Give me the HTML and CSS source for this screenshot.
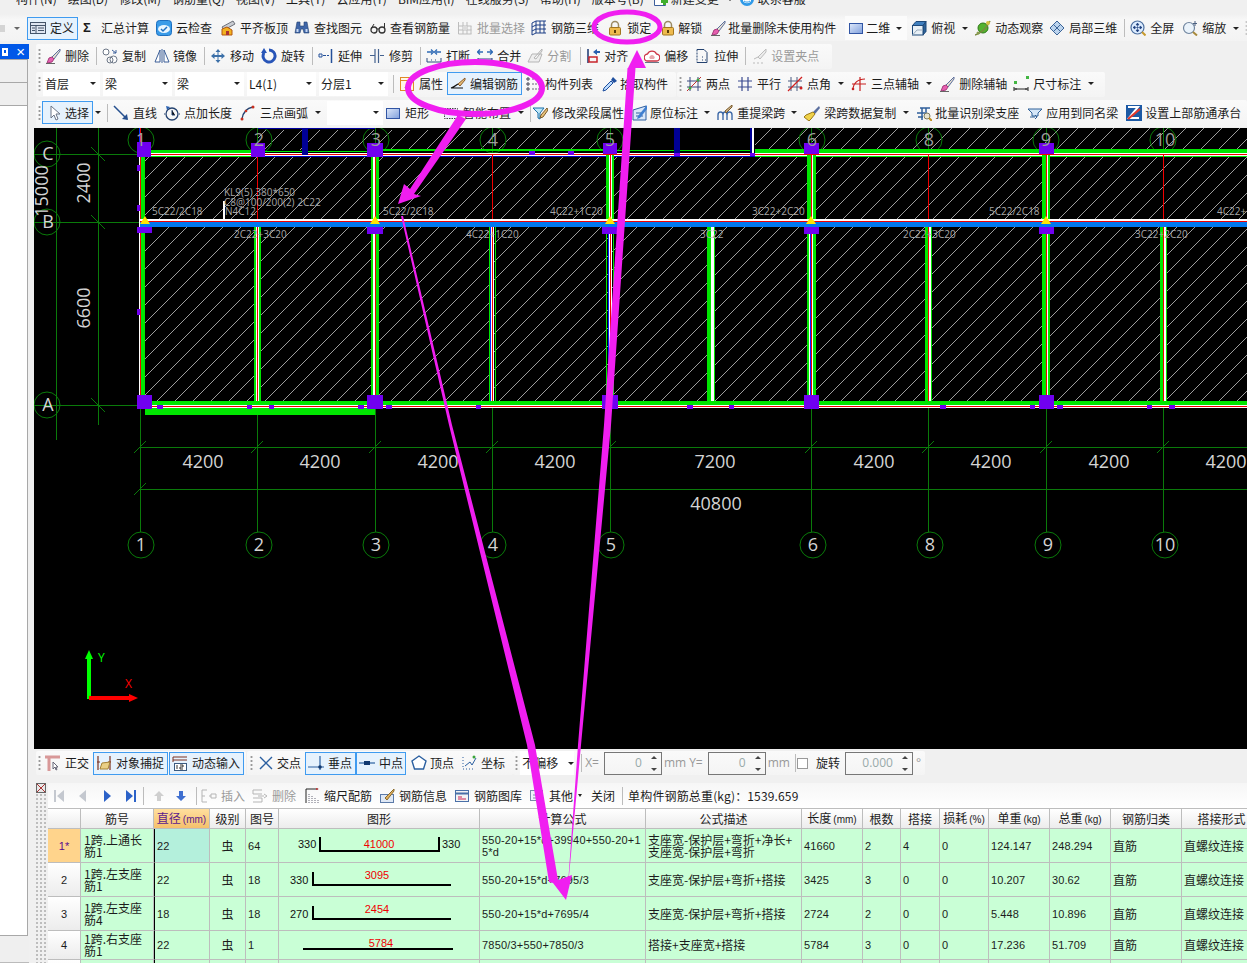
FILE: index.html
```html
<!DOCTYPE html>
<html lang="zh-CN">
<head>
<meta charset="utf-8">
<title>钢筋算量</title>
<link rel="stylesheet" href="styles.css">
</head>
<body>
<svg class="defs" aria-hidden="true">
<defs>
<pattern id="hatch" patternUnits="userSpaceOnUse" width="18" height="18"><path d="M-1 19L19 -1" stroke="#c4c4c4" stroke-width=".8"/><path d="M-1 1L1 -1M17 19L19 17" stroke="#c4c4c4" stroke-width=".8"/></pattern>
<symbol id="def" viewBox="0 0 16 16"><rect x=".5" y="2.5" width="15" height="11" fill="#dfe6f2" stroke="#44546a"/><path d="M.5 5.5h15M6 5.5v8M8 8h6M8 10.500h6M2 8h3M2 10.500h3" stroke="#44546a" fill="none"/></symbol>
<symbol id="cloud" viewBox="0 0 16 16"><rect x=".5" y=".5" width="15" height="15" rx="3" fill="#3a9be8" stroke="#1d6fc0"/><ellipse cx="8" cy="9" rx="6" ry="4" fill="#e8f5ff"/><path d="M5 9l2 2 4-4" stroke="#1d6fc0" stroke-width="1.500" fill="none"/></symbol>
<symbol id="flat" viewBox="0 0 16 16"><path d="M2 7L13 1l2 3L4 10z" fill="#c9ccd2" stroke="#6d7078"/><path d="M2 15V9l5-2 5 3v5z" fill="#f3b21f" stroke="#b3560f"/><rect x="6" y="11" width="3" height="4" fill="#a33"/></symbol>
<symbol id="binoc" viewBox="0 0 16 16"><path d="M3 2h3v4h4V2h3l2 11h-5l-1-4H7l-1 4H1z" fill="#3f66a8" stroke="#24406f" stroke-width=".6"/><path d="M2.500 9h2v3h-2zM11.500 9h2v3h-2z" fill="#c9d9f2"/></symbol>
<symbol id="glass" viewBox="0 0 16 16"><circle cx="4" cy="10" r="3" fill="none" stroke="#333" stroke-width="1.300"/><circle cx="12" cy="10" r="3" fill="none" stroke="#333" stroke-width="1.300"/><path d="M7 9h2M1.500 8L4 4M14.500 8V3" stroke="#333" fill="none"/></symbol>
<symbol id="gridg" viewBox="0 0 16 16"><path d="M1.500 2v12h13M1.500 6h13M1.500 10h13M6 2v12M10 2v12M14 6v8" stroke="#bdbdbd" fill="none"/><rect x="6" y="6" width="4" height="4" fill="#dcdcdc"/></symbol>
<symbol id="r3d" viewBox="0 0 16 16"><path d="M1 3l4-2v12l-4 2zM5 1h10M5 5H15M5 9h10M5 13h10M9 1v12M13 1v12M1 7l4-2M1 11l4-2" stroke="#1c3f86" fill="none"/></symbol>
<symbol id="lock" viewBox="0 0 16 16"><path d="M4.500 8V5a3.500 3.500 0 017 0v3" fill="none" stroke="#9b8a62" stroke-width="1.500"/><rect x="2.500" y="7.500" width="11" height="7.500" rx="1" fill="#eeba4e" stroke="#a2761f"/><rect x="7" y="10" width="2" height="3" fill="#5a3d08"/></symbol>
<symbol id="brush" viewBox="0 0 16 16"><path d="M15 1L7 9l2 2 6-8z" fill="#e6dfd0" stroke="#5c6f9d"/><path d="M7 9l-3 1-2 5 5-1 2-3z" fill="#e65fb0" stroke="#a63d7c"/><path d="M1 15.500h9" stroke="#666"/></symbol>
<symbol id="rect2" viewBox="0 0 16 16"><defs><linearGradient id="bl" x1="0" y1="0" x2="1" y2="1"><stop offset="0" stop-color="#dfe9fa"/><stop offset="1" stop-color="#7f9fdc"/></linearGradient></defs><rect x="1.500" y="3.500" width="13" height="10" fill="url(#bl)" stroke="#3155a4"/></symbol>
<symbol id="cube" viewBox="0 0 16 16"><path d="M1.500 5.500L5 1.500h10l-3 4z" fill="#3f7fbe" stroke="#1f4a7a"/><path d="M12 5.500l3-4v10l-3 3.500z" fill="#2d6298" stroke="#1f4a7a"/><rect x="1.500" y="5.500" width="10.500" height="9.500" fill="#e8f0f6" stroke="#1f4a7a"/><path d="M1.500 15L6 10h6" stroke="#9ab" fill="none"/></symbol>
<symbol id="orbit" viewBox="0 0 16 16"><circle cx="8" cy="8" r="5" fill="#55b22f" stroke="#2e7a18"/><path d="M0 15C5 14 12 8 15 1" fill="none" stroke="#7a8a40" stroke-width="1.500"/><circle cx="13" cy="3" r="2" fill="#d8c244"/><circle cx="3" cy="13" r="1.500" fill="#8a9a50"/></symbol>
<symbol id="part3" viewBox="0 0 16 16"><path d="M1 8l7-7 7 7-7 7z" fill="#bcd4ee" stroke="#3c6598"/><path d="M4.500 4.500l7 7M8 1l7 7M11.500 4.500l-7 7M8 8L4 12" stroke="#3c6598" fill="none"/></symbol>
<symbol id="zall" viewBox="0 0 16 16"><circle cx="7.500" cy="7.500" r="6.500" fill="#dcecff" stroke="#4c6f9f" stroke-width="1.200"/><path d="M7.500 3v9M3 7.500h9M7.500 3l-1.500 2h3zM7.500 12L6 10h3zM3 7.500L5 6v3zM12 7.500L10 6v3z" fill="#1f3f7d" stroke="#1f3f7d" stroke-width=".6"/><path d="M12 12l3.500 3.500" stroke="#c79a2e" stroke-width="2"/></symbol>
<symbol id="zm" viewBox="0 0 16 16"><circle cx="7" cy="8" r="5.500" fill="#eaf3fb" stroke="#70859f" stroke-width="1.200"/><path d="M11 12l4 3.500" stroke="#a88a3c" stroke-width="2"/><path d="M13 1v5M11 3.500h4" stroke="#4a5f80"/></symbol>
<symbol id="newc" viewBox="0 0 16 16"><path d="M2.500 1.500h8l3 3v10h-11z" fill="#fff" stroke="#3d5f9c"/><path d="M9 9h2V7h3v2h2v3h-2v2h-3v-2H9z" fill="#3fae2c"/></symbol>
<symbol id="svc" viewBox="0 0 16 16"><circle cx="8" cy="8" r="7" fill="#2f9ae8"/><path d="M4 7c0-5 8-5 8 0v3c-2 3-6 3-8 0z" fill="#fff"/><path d="M5 10c2 1.500 4 1.500 6 0" stroke="#2f9ae8" fill="none"/></symbol>
<symbol id="copy" viewBox="0 0 16 16"><circle cx="4" cy="4" r="3" fill="#fff" stroke="#6d7787"/><circle cx="11.500" cy="11.500" r="3.500" fill="#fff" stroke="#6d7787"/><circle cx="8" cy="12" r="3" fill="none" stroke="#6d7787"/><path d="M10 2l4 3M14 5V2M14 5h-3" stroke="#3a5f9a" fill="none"/></symbol>
<symbol id="mirror" viewBox="0 0 16 16"><path d="M6 2L1 14h5zM10 2l5 12h-5z" fill="#fff" stroke="#3c5f98"/><path d="M8 1v14" stroke="#3c5f98"/></symbol>
<symbol id="move" viewBox="0 0 16 16"><path d="M8 1l2.500 3h-2v3h3V5L15 8l-3.500 3V9h-3v3h2L8 15l-2.500-3h2V9h-3v2L1 8l3.500-3v2h3V4h-2z" fill="#3c70a8"/></symbol>
<symbol id="rot" viewBox="0 0 16 16"><path d="M8 2a6 6 0 11-5 2.800" fill="none" stroke="#2855b8" stroke-width="3"/><path d="M3 0l3 5H0z" fill="#2855b8"/></symbol>
<symbol id="ext" viewBox="0 0 16 16"><path d="M1 6h3v3H1zM5 7.500h3M9 7.500h2" stroke="#24509a" fill="none"/><path d="M13.500 1v14" stroke="#24509a" stroke-width="1.500"/></symbol>
<symbol id="trim" viewBox="0 0 16 16"><path d="M6 1v14M9.500 1v14M1 7.500h5M11 7.500h4" stroke="#44628f" stroke-width="1.200" fill="none"/></symbol>
<symbol id="brk" viewBox="0 0 16 16"><path d="M1 4h5M10 4h5M5 1.500L7.500 4 5 6.500M11 1.500L8.500 4 11 6.500" stroke="#2f6bb5" stroke-width="1.300" fill="none"/><path d="M1 10v4h14v-4M5 12h1M9 12h1" stroke="#2a4a80" fill="none"/></symbol>
<symbol id="mrg" viewBox="0 0 16 16"><path d="M1 4h5M10 4h5M3 1.500L.5 4 3 6.500M13 1.500L15.500 4 13 6.500" stroke="#2f6bb5" stroke-width="1.300" fill="none"/><path d="M1 10v4h14v-4M1 11h14" stroke="#2a4a80" fill="none"/></symbol>
<symbol id="spl" viewBox="0 0 16 16"><path d="M1 14L5 6h10l-3 8zM15 1L7 10l2 1 6-8z" fill="#eee" stroke="#b5b5b5"/></symbol>
<symbol id="algn" viewBox="0 0 16 16"><path d="M2 1v14" stroke="#18356f" stroke-width="1.500"/><path d="M11 1L7 4l4 3V5h3V3h-3z" fill="#2860b0"/><path d="M3 9h8v5H3z" fill="none" stroke="#c8252b" stroke-width="1.500"/></symbol>
<symbol id="off" viewBox="0 0 16 16"><path d="M4 13a3.500 3.500 0 01-.5-7 5 5 0 019 0A3.500 3.500 0 0112 13z" fill="#fff" stroke="#c34" stroke-width="1.300"/><path d="M6 11a2 2 0 010-3 3 3 0 014 0 2 2 0 010 3z" fill="#e7a7ad"/><path d="M1 14.500h14" stroke="#678"/></symbol>
<symbol id="str" viewBox="0 0 16 16"><path d="M3 1.500h7l3 3v10H3" fill="none" stroke="#24426f"/><path d="M3 1.500v13" stroke="#24426f" stroke-dasharray="2 1"/><path d="M8 9h1M8 12h1M11 12h1" stroke="#24426f"/></symbol>
<symbol id="grp" viewBox="0 0 16 16"><path d="M15 1L7 9l2 2 6-7z" fill="#ececec" stroke="#bdbdbd"/><path d="M2 15h2M6 15h2M10 15h2M3 11l4-2" stroke="#bbb" fill="none"/></symbol>
<symbol id="prop" viewBox="0 0 16 16"><rect x="1.500" y="1.500" width="13" height="13" fill="#fff6e6" stroke="#e08a28"/><path d="M1.500 4.500h13" stroke="#e08a28"/><path d="M6 12l6-6" stroke="#666" stroke-width="1.500"/></symbol>
<symbol id="edit" viewBox="0 0 16 16"><path d="M15 2L8 8l2 2 5-6z" fill="#e8c27a" stroke="#8a5a2a"/><path d="M8 8c-2 1-3 3-7 4h12" fill="none" stroke="#111" stroke-width="1.200"/></symbol>
<symbol id="list" viewBox="0 0 16 16"><path d="M1 2h2v2H1zM1 7h2v2H1zM1 12h2v2H1z" fill="#fff" stroke="#445"/><path d="M6 3h9M6 8h9M6 13h9" stroke="#667" stroke-dasharray="2 1"/></symbol>
<symbol id="pick" viewBox="0 0 16 16"><path d="M11 1l4 4-3 2-3-3z" fill="#1f4f9e"/><path d="M9 5l2 2-7 7-3 1 1-3z" fill="#bcdcff" stroke="#1f4f9e"/></symbol>
<symbol id="two" viewBox="0 0 16 16"><path d="M4 1v14M12 1v14M1 5h14M1 11h14" stroke="#3a4a7f"/><path d="M15 1L1 15" stroke="#c03030"/><circle cx="4" cy="12" r="1.500" fill="#3da53d"/><circle cx="12" cy="4" r="1.500" fill="#3da53d"/></symbol>
<symbol id="par" viewBox="0 0 16 16"><path d="M5 1v14M11 1v14M1 5h14M1 11h14" stroke="#3a4a90" stroke-width="1.200"/></symbol>
<symbol id="ang" viewBox="0 0 16 16"><path d="M4 1v14M10 1v14M1 5h14M1 11h14" stroke="#4a5a80"/><path d="M15 1L1 15" stroke="#d02020" stroke-width="1.300"/><circle cx="14" cy="12" r="1.500" fill="#d02020"/></symbol>
<symbol id="arcx" viewBox="0 0 16 16"><path d="M2 14C2 7 7 3 14 3M9 1v14M1 8h14" fill="none" stroke="#c82020" stroke-width="1.200"/><circle cx="2" cy="13" r="1.300" fill="#c82020"/></symbol>
<symbol id="dim" viewBox="0 0 16 16"><rect x="1" y="5" width="3" height="3" fill="#43b643"/><rect x="13" y="0" width="3" height="3" fill="#43b643"/><path d="M1 11v4M15 11v4M1 13h14M3 12v2M13 12v2" stroke="#222" fill="none"/></symbol>
<symbol id="cur" viewBox="0 0 16 16"><path d="M4 1v12l3-3 2 5 2-1-2-5h4z" fill="#fff" stroke="#6a7486"/></symbol>
<symbol id="ln" viewBox="0 0 16 16"><path d="M1 1l13 13" stroke="#26508f" stroke-width="1.500"/><path d="M15 15l-6-1 5-5z" fill="#26508f"/></symbol>
<symbol id="plen" viewBox="0 0 16 16"><circle cx="8" cy="9" r="6" fill="none" stroke="#24426f" stroke-width="1.300"/><path d="M8 5v5h3M1 9h-1M15 9h1" stroke="#24426f"/><path d="M2 1l4 1-3 3z" fill="#2860b0"/></symbol>
<symbol id="arc" viewBox="0 0 16 16"><path d="M2 14C3 7 7 3 13 2" fill="none" stroke="#24426f" stroke-width="1.300"/><circle cx="2" cy="14" r="1.500" fill="#c83020"/><circle cx="6" cy="6" r="1.300" fill="#c83020"/><circle cx="13" cy="2" r="1.500" fill="#c83020"/></symbol>
<symbol id="smart" viewBox="0 0 16 16"><rect x="1.500" y="3.500" width="13" height="10" fill="#eef" stroke="#444" stroke-dasharray="1.500 1"/><path d="M5 8h6" stroke="#2a6" stroke-width="2"/></symbol>
<symbol id="funnel" viewBox="0 0 16 16"><path d="M1 3h11L8 8v6l-2-1V8z" fill="#bfe8f8" stroke="#1a6fa8"/><path d="M15 3L9 10l-1 3 3-1 5-7z" fill="#e8c27a" stroke="#7a5a2a"/></symbol>
<symbol id="yw" viewBox="0 0 16 16"><path d="M1 15V5l13-4v14z" fill="#d8e6f8" stroke="#3060a0"/><path d="M4 8h7M4 11h7" stroke="#3060a0"/><path d="M15 0L6 11l-1 3 3-1 7-9z" fill="#3f7fd0"/></symbol>
<symbol id="reti" viewBox="0 0 16 16"><path d="M1 15v-5c0-4 5-4 5 0v5M10 15v-5c0-4 5-4 5 0v5M6 10c0-4 4-4 4 0" fill="none" stroke="#3f6aa8" stroke-width="1.400"/><path d="M15 0L8 6l1 2 6-6z" fill="#cdb38a" stroke="#7a5a2a"/></symbol>
<symbol id="brd" viewBox="0 0 16 16"><path d="M15 1l-6 6 2 2 5-6z" fill="#5b6f9f"/><path d="M9 7L2 10l-2 2 5 4 2-2 4-5z" fill="#f0d24a" stroke="#9a7a1a"/></symbol>
<symbol id="bid" viewBox="0 0 16 16"><path d="M1 8h8M4 3h10M6 3v12M10 3v5M2 12h5" stroke="#2f5f9a" stroke-width="1.500" fill="none"/><circle cx="11" cy="11" r="3" fill="#e8e4d0" stroke="#7a7a60"/><path d="M13 13l3 3" stroke="#c09020" stroke-width="2"/></symbol>
<symbol id="apply" viewBox="0 0 16 16"><path d="M1 4h14l-4 4v3H5V8z" fill="#d5e7f8" stroke="#2f6098"/><path d="M3 12h5M8 10l2 2-2 2" stroke="#2f6098" fill="none"/></symbol>
<symbol id="setu" viewBox="0 0 16 16"><rect width="16" height="16" fill="#1d5aa5"/><path d="M2 2h10L3 13h10" fill="none" stroke="#fff" stroke-width="2"/><path d="M2 14L14 4" stroke="#e4382c" stroke-width="2.200"/></symbol>
<symbol id="orth" viewBox="0 0 16 16"><path d="M0 2h15M4 2v14" stroke="#d89898" stroke-width="3"/><path d="M8 7v7l2-2 1 3 1-.5-1-2.500h2z" fill="#fff" stroke="#667"/></symbol>
<symbol id="snap" viewBox="0 0 16 16"><path d="M2 1v14M14 1v14M1 7h3M12 7h3" stroke="#7a3020" stroke-width="1.200"/><path d="M4 14l2-6 8-1-2 7z" fill="#e9cf85" stroke="#a58235"/></symbol>
<symbol id="dyn" viewBox="0 0 16 16"><path d="M1 2h14M1 5h14M1 2v5" stroke="#7a3020"/><rect x="2.500" y="8.500" width="12" height="7" fill="#fff" stroke="#3a5a80"/><path d="M5 10v4M8 10h3v2H8v2h3" stroke="#333" fill="none"/></symbol>
<symbol id="cross" viewBox="0 0 16 16"><path d="M2 2l12 12M14 2L2 14" stroke="#2a5fa0" stroke-width="1.400"/></symbol>
<symbol id="perp" viewBox="0 0 16 16"><path d="M0 12h16M12 1v14" stroke="#2a5fa0" stroke-width="1.200"/><circle cx="12" cy="12" r="1.800" fill="#12396f"/></symbol>
<symbol id="mid" viewBox="0 0 16 16"><path d="M0 8h16" stroke="#2a5fa0" stroke-width="1.200"/><rect x="5" y="6" width="6" height="4" fill="#12396f"/></symbol>
<symbol id="vert" viewBox="0 0 16 16"><path d="M8 1l7 5-2.500 8h-9L1 6z" fill="#fff" stroke="#2a5fa0" stroke-width="1.400"/></symbol>
<symbol id="coord" viewBox="0 0 16 16"><path d="M2 2v1M2 5v1M2 8v1M2 11v1M2 14h1M5 14h1M8 14h1M11 14h1" stroke="#2a5fa0"/><path d="M4 11l5-4 2 3 4-7" fill="none" stroke="#2a5fa0"/><circle cx="13" cy="2" r="1.500" fill="#3aa43a"/></symbol>
<symbol id="first" viewBox="0 0 12 16"><path d="M1 2h2v12H1zM11 2L4 8l7 6z" fill="#c4c8cf"/></symbol>
<symbol id="prev" viewBox="0 0 12 16"><path d="M9 2L2 8l7 6z" fill="#c4c8cf"/></symbol>
<symbol id="next" viewBox="0 0 12 16"><path d="M3 2l7 6-7 6z" fill="#2c62c8"/></symbol>
<symbol id="last" viewBox="0 0 12 16"><path d="M1 2l7 6-7 6zM9 2h2v12H9z" fill="#2c62c8"/></symbol>
<symbol id="up" viewBox="0 0 12 16"><path d="M6 3l5 5H8v5H4V8H1z" fill="#cfcfcf"/></symbol>
<symbol id="down" viewBox="0 0 12 16"><path d="M4 3h4v5h3l-5 5-5-5h3z" fill="#3f6fd0"/></symbol>
<symbol id="ins" viewBox="0 0 16 16"><path d="M6 2H1v12h5M1 8h3M8 8h2M10 6h5v4h-5z" fill="none" stroke="#b5b5b5"/></symbol>
<symbol id="dl" viewBox="0 0 16 16"><path d="M10 2H1v4h9M1 10h9v4H1M6 8h6M12 6l3 2-3 2" fill="none" stroke="#b5b5b5"/></symbol>
<symbol id="scl" viewBox="0 0 16 16"><path d="M1 1v14M1 1h12" stroke="#222"/><path d="M4 6v9M7 8v7M10 10v5M13 12v3" stroke="#667" stroke-dasharray="1 1"/><path d="M11 0l3 1-3 1z" fill="#c33"/></symbol>
<symbol id="inf" viewBox="0 0 16 16"><rect x="1.500" y="6.500" width="13" height="8" fill="#dfe8f5" stroke="#5c7aa8"/><path d="M15 1L6 10l2 2 7-9z" fill="#e0b060" stroke="#8a6a2a"/></symbol>
<symbol id="lib" viewBox="0 0 16 16"><rect x="1.500" y="2.500" width="13" height="11" fill="#f4f4f4" stroke="#4a70a8"/><path d="M1.500 5.500h13" stroke="#4a70a8" stroke-width="2"/><path d="M4 9h4M4 11h8" stroke="#c25" /></symbol>
<symbol id="oth" viewBox="0 0 16 16"><rect x="1.500" y="2.500" width="12" height="10" fill="#eef3fa" stroke="#7a8ca8"/><path d="M4 7h8M4 10h4" stroke="#7a8ca8"/><path d="M10 10h5v5h-5z" fill="#3f6fd0"/></symbol>
</defs>
</svg>

<div class="app">
  <nav class="menu">
    <span>构件(N)</span><span>绘图(D)</span><span>修改(M)</span><span>钢筋量(Q)</span><span>视图(V)</span><span>工具(T)</span><span>云应用(Y)</span><span>BIM应用(I)</span><span>在线服务(S)</span><span>帮助(H)</span><span>版本号(B)</span>
    <div class="it gap3 newc"><svg class="i"><use href="#newc"/></svg><span>新建变更</span></div>
    <i class="arr menuarr"></i>
    <div class="it gap3"><svg class="i"><use href="#svc"/></svg><span>联系客服</span></div>
  </nav>

  <div class="tb first">
    <span class="stub"></span><i class="arr stubarr"></i>
    <div class="it box r5"><svg class="i"><use href="#def"/></svg><span>定义</span></div>
    <b class="sigma">Σ</b>
    <div class="it r7"><span>汇总计算</span></div>
    <div class="it"><svg class="i"><use href="#cloud"/></svg><span>云检查</span></div>
    <div class="it r6"><svg class="i"><use href="#flat"/></svg><span>平齐板顶</span></div>
    <div class="it"><svg class="i"><use href="#binoc"/></svg><span>查找图元</span></div>
    <div class="it r7"><svg class="i"><use href="#glass"/></svg><span>查看钢筋量</span></div>
    <div class="it off r6"><svg class="i"><use href="#gridg"/></svg><span>批量选择</span></div>
    <div class="it"><svg class="i"><use href="#r3d"/></svg><span>钢筋三维</span></div>
    <div class="it r9"><svg class="i"><use href="#lock"/></svg><span>锁定</span></div>
    <div class="it gap2"><svg class="i"><use href="#lock"/></svg><span>解锁</span></div>
    <div class="it gap2"><svg class="i"><use href="#brush"/></svg><span>批量删除未使用构件</span></div>
    <div class="view2d">
      <div class="it gap2"><svg class="i"><use href="#rect2"/></svg><span>二维</span></div>
      <i class="arr"></i>
    </div>
    <div class="it"><svg class="i"><use href="#cube"/></svg><span>俯视</span></div>
    <i class="arr"></i>
    <div class="it r6"><svg class="i"><use href="#orbit"/></svg><span>动态观察</span></div>
    <div class="it"><svg class="i"><use href="#part3"/></svg><span>局部三维</span></div>
    <i class="sep"></i>
    <div class="it"><svg class="i"><use href="#zall"/></svg><span>全屏</span></div>
    <div class="it"><svg class="i"><use href="#zm"/></svg><span>缩放</span></div>
    <i class="arr"></i>
    <i class="grip endgrip"></i>
  </div>

  <div class="main">
    <aside class="side">
      <div class="sidehead"><span class="pin"></span><span class="close">×</span></div>
      <div class="siderow"></div>
      <div class="siderow"></div>
      <div class="sidebody"></div>
      <div class="sidefoot"></div>
    </aside>

    <div class="work">
      <div class="tb row2">
        <div class="panel">
          <i class="grip"></i>
          <div class="it"><svg class="i"><use href="#brush"/></svg><span>删除</span></div>
          <i class="sep"></i>
          <div class="it"><svg class="i"><use href="#copy"/></svg><span>复制</span></div>
          <div class="it gap3"><svg class="i"><use href="#mirror"/></svg><span>镜像</span></div>
          <i class="sep"></i>
          <div class="it r7"><svg class="i"><use href="#move"/></svg><span>移动</span></div>
          <div class="it"><svg class="i"><use href="#rot"/></svg><span>旋转</span></div>
          <i class="sep"></i>
          <div class="it r7"><svg class="i"><use href="#ext"/></svg><span>延伸</span></div>
          <div class="it"><svg class="i"><use href="#trim"/></svg><span>修剪</span></div>
          <i class="sep"></i>
          <div class="it r7"><svg class="i"><use href="#brk"/></svg><span>打断</span></div>
          <div class="it r6"><svg class="i"><use href="#mrg"/></svg><span>合并</span></div>
          <div class="it off r10"><svg class="i"><use href="#spl"/></svg><span>分割</span></div>
          <i class="sep"></i>
          <div class="it gap2 r16"><svg class="i"><use href="#algn"/></svg><span>对齐</span></div>
          <div class="it r6"><svg class="i"><use href="#off"/></svg><span>偏移</span></div>
          <div class="it"><svg class="i"><use href="#str"/></svg><span>拉伸</span></div>
          <i class="sep"></i>
          <div class="it off"><svg class="i"><use href="#grp"/></svg><span>设置夹点</span></div>
        </div>
      </div>

      <div class="tb row3">
        <div class="panel p1">
          <i class="grip"></i>
          <div class="cbo narrow"><span>首层</span><i class="arr"></i></div>
          <div class="cbo"><span>梁</span><i class="arr"></i></div>
          <div class="cbo"><span>梁</span><i class="arr"></i></div>
          <div class="cbo"><span>L4(1)</span><i class="arr"></i></div>
          <div class="cbo lastcbo"><span>分层1</span><i class="arr"></i></div>
          <i class="sep"></i>
          <div class="it r4"><svg class="i"><use href="#prop"/></svg><span>属性</span></div>
          <div class="it box r4"><svg class="i"><use href="#edit"/></svg><span>编辑钢筋</span></div>
          <div class="it gap3 r9"><svg class="i"><use href="#list"/></svg><span>构件列表</span></div>
          <div class="it gap2"><svg class="i"><use href="#pick"/></svg><span>拾取构件</span></div>
        </div>
        <div class="panel p2">
          <i class="grip"></i>
          <div class="it r7"><svg class="i"><use href="#two"/></svg><span>两点</span></div>
          <div class="it r6"><svg class="i"><use href="#par"/></svg><span>平行</span></div>
          <div class="it"><svg class="i"><use href="#ang"/></svg><span>点角</span></div>
          <i class="arr"></i>
          <div class="it"><svg class="i"><use href="#arcx"/></svg><span>三点辅轴</span></div>
          <i class="arr"></i>
          <div class="it r6"><svg class="i"><use href="#brush"/></svg><span>删除辅轴</span></div>
          <div class="it"><svg class="i"><use href="#dim"/></svg><span>尺寸标注</span></div>
          <i class="arr"></i>
        </div>
      </div>

      <div class="tb row4">
        <div class="panel full">
          <i class="grip"></i>
          <div class="it box sel gap2"><svg class="i"><use href="#cur"/></svg><span>选择</span></div>
          <i class="arr"></i>
          <i class="sep"></i>
          <div class="it r7"><svg class="i"><use href="#ln"/></svg><span>直线</span></div>
          <div class="it"><svg class="i"><use href="#plen"/></svg><span>点加长度</span></div>
          <div class="it"><svg class="i"><use href="#arc"/></svg><span>三点画弧</span></div>
          <i class="arr"></i>
          <div class="cbo blank"><span></span><i class="arr"></i></div>
          <div class="it r14"><svg class="i"><use href="#rect2"/></svg><span>矩形</span></div>
          <div class="it"><svg class="i"><use href="#smart"/></svg><span>智能布置</span></div>
          <i class="arr"></i>
          <i class="sep s1"></i>
          <div class="it"><svg class="i"><use href="#funnel"/></svg><span>修改梁段属性</span></div>
          <div class="it gap2 r7"><svg class="i"><use href="#yw"/></svg><span>原位标注</span></div>
          <i class="arr"></i>
          <div class="it r7"><svg class="i"><use href="#reti"/></svg><span>重提梁跨</span></div>
          <i class="arr"></i>
          <div class="it"><svg class="i"><use href="#brd"/></svg><span>梁跨数据复制</span></div>
          <i class="arr"></i>
          <div class="it gap3"><svg class="i"><use href="#bid"/></svg><span>批量识别梁支座</span></div>
          <div class="it gap3"><svg class="i"><use href="#apply"/></svg><span>应用到同名梁</span></div>
          <div class="it gap3 r0"><svg class="i"><use href="#setu"/></svg><span>设置上部筋通承台</span></div>
        </div>
      </div>

      <div class="canvas">
        <svg class="cad" viewBox="34 128 1213 621" width="1213" height="621">
          <rect x="34" y="128" width="1213" height="621" fill="#000"/>
          <g fill="url(#hatch)">
            <rect x="141" y="157" width="1106" height="65"/>
            <rect x="141" y="227" width="1106" height="174"/>
            <rect x="258" y="130" width="352" height="20"/>
            <rect x="755" y="128" width="492" height="22"/>
          </g>
          <g stroke="#0a7a0a" fill="none">
            <path d="M34 154.500H1247M34 222.500H1247M34 405.500H1247M140 447.500H1247M140 489.500H1247M56.500 128V440M98.500 128V425"/>
            <path d="M140.500 128V532M257.500 128V532M375.500 128V532M492.500 128V532M610.500 128V532M811.500 128V532M928.500 128V532M1046.500 128V532M1163.500 128V532"/>
            <path d="M91 147l14 14M91 215l14 14M91 398l14 14M134 453l12-12M251 453l12-12M369 453l12-12M486 453l12-12M604 453l12-12M805 453l12-12M922 453l12-12M1040 453l12-12M1157 453l12-12M134 495l12-12"/>
            <circle cx="47" cy="154" r="13"/><circle cx="47" cy="222" r="13"/><circle cx="47" cy="405" r="13"/>
            <circle cx="141" cy="140" r="13"/><circle cx="259" cy="140" r="13"/><circle cx="376" cy="140" r="13"/><circle cx="493" cy="140" r="13"/><circle cx="610" cy="140" r="13"/><circle cx="812" cy="140" r="13"/><circle cx="929" cy="140" r="13"/><circle cx="1046" cy="140" r="13"/><circle cx="1163" cy="140" r="13"/>
            <circle cx="141" cy="545" r="13"/><circle cx="259" cy="545" r="13"/><circle cx="376" cy="545" r="13"/><circle cx="493" cy="545" r="13"/><circle cx="611" cy="545" r="13"/><circle cx="813" cy="545" r="13"/><circle cx="930" cy="545" r="13"/><circle cx="1048" cy="545" r="13"/><circle cx="1165" cy="545" r="13"/>
          </g>
          <!-- top beam -->
          <g fill="#00e600">
            <rect x="145" y="150" width="113" height="7"/><rect x="258" y="151" width="117" height="1"/><rect x="375" y="149" width="235" height="2"/><rect x="610" y="150" width="144" height="1"/><rect x="755" y="149" width="492" height="8"/>
          </g>
          <rect x="258" y="155" width="497" height="2" fill="#0000c8"/>
          <rect x="140" y="153" width="1107" height="3" fill="#fff"/>
          <rect x="140" y="154" width="1107" height="1" fill="#f00000"/>
          <rect x="302" y="128" width="6" height="27" fill="#000096"/><rect x="674" y="128" width="6" height="27" fill="#000096"/><rect x="750" y="128" width="2" height="27" fill="#000096"/><rect x="752" y="128" width="2" height="27" fill="#fff"/><rect x="258" y="128" width="117" height="1" fill="#0000a0"/>
          <!-- verticals -->
          <g fill="#00e600">
            <rect x="141" y="155" width="4" height="250"/>
            <rect x="254" y="227" width="7" height="175"/>
            <rect x="371" y="155" width="8" height="250"/>
            <rect x="606" y="155" width="8" height="66"/>
            <rect x="707" y="227" width="8" height="175"/>
            <rect x="807" y="155" width="9" height="250"/>
            <rect x="925" y="227" width="7" height="175"/>
            <rect x="1042" y="155" width="8" height="250"/>
            <rect x="1160" y="227" width="7" height="175"/>
            <rect x="489" y="227" width="1" height="175"/><rect x="495" y="227" width="1" height="175"/>
            <rect x="606" y="233" width="1" height="170"/><rect x="613" y="233" width="1" height="170"/>
          </g>
          <g fill="#0028ff"><rect x="490" y="227" width="1" height="175"/><rect x="608" y="233" width="1" height="170"/><rect x="810" y="233" width="1" height="170"/><rect x="139" y="128" width="1" height="277"/></g>
          <g fill="#fff">
            <rect x="139" y="155" width="2" height="250"/><rect x="256" y="227" width="3" height="175"/><rect x="373" y="155" width="3" height="250"/><rect x="491" y="227" width="3" height="175"/><rect x="609" y="155" width="3" height="250"/><rect x="711" y="227" width="3" height="175"/><rect x="809" y="233" width="1" height="170"/><rect x="812" y="155" width="1" height="250"/><rect x="929" y="227" width="2" height="175"/><rect x="1047" y="155" width="1" height="250"/><rect x="1164" y="227" width="2" height="175"/>
          </g>
          <g fill="#f00000">
            <rect x="140" y="128" width="1" height="278"/><rect x="257" y="154" width="1" height="252"/><rect x="375" y="154" width="1" height="252"/><rect x="492" y="154" width="1" height="252"/><rect x="610" y="154" width="1" height="252"/><rect x="811" y="154" width="1" height="252"/><rect x="928" y="154" width="1" height="252"/><rect x="1046" y="154" width="1" height="252"/><rect x="1163" y="154" width="1" height="252"/>
          </g>
          <!-- middle beam -->
          <rect x="140" y="222" width="1107" height="5" fill="#0078f0"/>
          <rect x="140" y="219" width="1107" height="3" fill="#fff"/>
          <rect x="140" y="221" width="1107" height="1" fill="#f00000"/>
          <!-- bottom beam -->
          <rect x="140" y="401" width="1107" height="5" fill="#00e600"/>
          <rect x="140" y="405" width="1107" height="3" fill="#fff"/>
          <rect x="140" y="406" width="1107" height="1" fill="#f00000"/>
          <rect x="145" y="408" width="230" height="7" fill="#00e600"/>
          <!-- columns -->
          <g fill="#7000f0">
            <rect x="137" y="142" width="14" height="15"/><rect x="251" y="143" width="14" height="14"/><rect x="367" y="143" width="16" height="14"/><rect x="603" y="143" width="14" height="11"/><rect x="804" y="143" width="15" height="11"/><rect x="1039" y="143" width="15" height="11"/>
            <rect x="137" y="227" width="15" height="6"/><rect x="367" y="227" width="16" height="7"/><rect x="602" y="227" width="16" height="7"/><rect x="804" y="227" width="15" height="7"/><rect x="1039" y="227" width="15" height="7"/>
            <rect x="137" y="395" width="15" height="14"/><rect x="367" y="395" width="16" height="14"/><rect x="602" y="395" width="16" height="14"/><rect x="804" y="395" width="15" height="14"/><rect x="1039" y="395" width="15" height="14"/>
            <rect x="157" y="405" width="6" height="4"/><rect x="247" y="405" width="5" height="4"/><rect x="269" y="405" width="5" height="4"/><rect x="358" y="405" width="6" height="4"/><rect x="386" y="405" width="6" height="4"/><rect x="476" y="405" width="5" height="4"/><rect x="687" y="405" width="6" height="4"/><rect x="729" y="405" width="5" height="4"/><rect x="940" y="405" width="6" height="4"/><rect x="1030" y="405" width="5" height="4"/><rect x="1057" y="405" width="6" height="4"/><rect x="1147" y="405" width="5" height="4"/><rect x="1169" y="405" width="6" height="4"/>
            <rect x="137" y="165" width="3" height="6"/><rect x="137" y="205" width="3" height="6"/><rect x="137" y="309" width="3" height="6"/><rect x="529" y="151" width="6" height="4"/><rect x="568" y="151" width="6" height="4"/><rect x="674" y="153" width="6" height="3"/><rect x="750" y="153" width="5" height="3"/>
          </g>
          <g fill="#ffe600">
            <path d="M145 216l5 8h-10zM375 216l5 8h-10zM610 216l5 8h-10zM811 216l5 8h-10zM1046 216l5 8h-10z"/>
          </g>
          <rect x="223" y="201" width="2" height="19" fill="#fff"/>
          <!-- beam text -->
          <g class="beamtx">
            <text x="152" y="215">5C22/2C18</text><text x="224" y="196">KL9(5) 380*650</text><text x="224" y="206">C8@100/200(2) 2C22</text><text x="225" y="215">N4C12</text><text x="234" y="238">2C22+3C20</text>
            <text x="383" y="215">5C22/2C18</text><text x="466" y="238">4C22+1C20</text><text x="550" y="215">4C22+1C20</text><text x="700" y="238">3C22</text><text x="752" y="215">3C22+2C20</text><text x="903" y="238">2C22+3C20</text><text x="989" y="215">5C22/2C18</text><text x="1135" y="238">3C22+2C20</text><text x="1217" y="215">4C22+</text>
          </g>
          <!-- axis and dimension labels -->
          <g class="axistx">
            <text x="141" y="146" class="dimm">1</text><text x="259" y="146" class="dimm">2</text><text x="376" y="146" class="dimm">3</text><text x="493" y="146" class="dimm">4</text><text x="610" y="146" class="dimm">5</text><text x="812" y="146" class="dimm">6</text><text x="929" y="146" class="dimm">8</text><text x="1046" y="146" class="dimm">9</text><text x="1165" y="146" class="dimm">10</text>
            <text x="48" y="160">C</text><text x="48" y="228">B</text><text x="48" y="411">A</text>
            <text x="141" y="551">1</text><text x="259" y="551">2</text><text x="376" y="551">3</text><text x="493" y="551">4</text><text x="611" y="551">5</text><text x="813" y="551">6</text><text x="930" y="551">8</text><text x="1048" y="551">9</text><text x="1165" y="551">10</text>
            <text x="203" y="468">4200</text><text x="320" y="468">4200</text><text x="438" y="468">4200</text><text x="555" y="468">4200</text><text x="715" y="468">7200</text><text x="874" y="468">4200</text><text x="991" y="468">4200</text><text x="1109" y="468">4200</text><text x="1226" y="468">4200</text><text x="716" y="510">40800</text>
            <text transform="translate(90 183) rotate(-90)">2400</text><text transform="translate(90 308) rotate(-90)">6600</text><text transform="translate(48 191) rotate(-90)">15000</text>
          </g>
          <!-- UCS -->
          <rect x="87" y="659" width="4" height="40" fill="#00ff00"/><path d="M89 650l4 9h-8z" fill="#00ff00"/>
          <rect x="89" y="696" width="40" height="4" fill="#ff0000"/><path d="M138 698l-9 4v-8z" fill="#ff0000"/>
          <text x="98" y="662" class="ucs ucsy">Y</text><text x="125" y="688" class="ucs ucsx">X</text>
        </svg>
      </div>

      <div class="tb status">
        <div class="panel sp1">
          <i class="grip"></i>
          <div class="it r4"><svg class="i"><use href="#orth"/></svg><span>正交</span></div>
          <div class="it box r1"><svg class="i"><use href="#snap"/></svg><span>对象捕捉</span></div>
          <div class="it box r0"><svg class="i"><use href="#dyn"/></svg><span>动态输入</span></div>
        </div>
        <div class="panel sp2">
          <i class="grip"></i>
          <div class="it gap3 r4"><svg class="i"><use href="#cross"/></svg><span>交点</span></div>
          <div class="it box r0"><svg class="i"><use href="#perp"/></svg><span>垂点</span></div>
          <div class="it box mid r5"><svg class="i"><use href="#mid"/></svg><span>中点</span></div>
          <div class="it gap3 r7"><svg class="i"><use href="#vert"/></svg><span>顶点</span></div>
          <div class="it"><svg class="i"><use href="#coord"/></svg><span>坐标</span></div>
        </div>
        <div class="panel sp3">
          <i class="grip"></i>
          <div class="cbo offset"><span>不偏移</span><i class="arr"></i></div>
          <i class="sep"></i>
          <span class="lab xlab">X=</span>
          <div class="spin"><span>0</span><em></em></div>
          <span class="lab">mm</span>
          <span class="lab ylab">Y=</span>
          <div class="spin"><span>0</span><em></em></div>
          <span class="lab">mm</span>
          <i class="sep endsep"></i>
          <i class="check"></i>
          <span class="rotlab">旋转</span>
          <div class="spin rotspin"><span>0.000</span><em></em></div>
          <span class="lab">°</span>
        </div>
      </div>

      <div class="bottom">
        <div class="dots"><span class="dockx"></span></div>
        <div class="gridwrap">
          <div class="gridbar">
            <svg class="n"><use href="#first"/></svg><svg class="n"><use href="#prev"/></svg><svg class="n"><use href="#next"/></svg><svg class="n"><use href="#last"/></svg>
            <i class="sep navsep"></i>
            <svg class="n nn"><use href="#up"/></svg><svg class="n nn"><use href="#down"/></svg>
            <i class="sep editsep"></i>
            <div class="it off r7"><svg class="i"><use href="#ins"/></svg><span>插入</span></div>
            <div class="it off r9"><svg class="i"><use href="#dl"/></svg><span>删除</span></div>
            <div class="it gap3 r7"><svg class="i"><use href="#scl"/></svg><span>缩尺配筋</span></div>
            <div class="it r7"><svg class="i"><use href="#inf"/></svg><span>钢筋信息</span></div>
            <div class="it r7"><svg class="i"><use href="#lib"/></svg><span>钢筋图库</span></div>
            <div class="it r5"><svg class="i"><use href="#oth"/></svg><span>其他</span></div>
            <i class="arr tiny"></i>
            <span class="close2">关闭</span>
            <i class="sep"></i>
            <span class="total">单构件钢筋总重(kg)：1539.659</span>
          </div>
          <table class="rebar">
            <colgroup><col class="c1"><col class="c2"><col class="c3"><col class="c4"><col class="c5"><col class="c6"><col class="c7"><col class="c8"><col class="c9"><col class="c10"><col class="c11"><col class="c12"><col class="c13"><col class="c14"><col class="c15"><col class="c16"></colgroup>
            <thead>
              <tr><th></th><th>筋号</th><th class="act">直径<small>(mm)</small></th><th>级别</th><th>图号</th><th>图形</th><th>计算公式</th><th>公式描述</th><th>长度<small>(mm)</small></th><th>根数</th><th>搭接</th><th>损耗<small>(%)</small></th><th>单重<small>(kg)</small></th><th>总重<small>(kg)</small></th><th>钢筋归类</th><th>搭接形式</th></tr>
            </thead>
            <tbody>
              <tr>
                <td class="rh cur">1*</td><td class="nm">1跨.上通长<br>筋1</td><td class="num div seld">22</td><td class="gr">虫</td><td class="num">64</td>
                <td class="sh"><svg viewBox="0 0 201 33" width="201" height="33"><text x="19" y="19">330</text><path d="M41 8V22H160V8" class="bar"/><text x="163" y="19">330</text><text x="100" y="19" class="rd">41000</text></svg></td>
                <td class="num fm">550-20+15*d+39940+550-20+1<br>5*d</td><td class="ds">支座宽-保护层+弯折+净长+<br>支座宽-保护层+弯折</td><td class="num">41660</td><td class="num">2</td><td class="num">4</td><td class="num">0</td><td class="num">124.147</td><td class="num">248.294</td><td>直筋</td><td>直螺纹连接</td>
              </tr>
              <tr>
                <td class="rh">2</td><td class="nm">1跨.左支座<br>筋1</td><td class="num div">22</td><td class="gr">虫</td><td class="num">18</td>
                <td class="sh"><svg viewBox="0 0 201 33" width="201" height="33"><text x="11" y="21">330</text><path d="M34 9V22H172" class="bar"/><text x="98" y="16" class="rd">3095</text></svg></td>
                <td class="num fm">550-20+15*d+7695/3</td><td class="ds">支座宽-保护层+弯折+搭接</td><td class="num">3425</td><td class="num">3</td><td class="num">0</td><td class="num">0</td><td class="num">10.207</td><td class="num">30.62</td><td>直筋</td><td>直螺纹连接</td>
              </tr>
              <tr>
                <td class="rh">3</td><td class="nm">1跨.左支座<br>筋4</td><td class="num div">18</td><td class="gr">虫</td><td class="num">18</td>
                <td class="sh"><svg viewBox="0 0 201 33" width="201" height="33"><text x="11" y="21">270</text><path d="M34 9V22H172" class="bar"/><text x="98" y="16" class="rd">2454</text></svg></td>
                <td class="num fm">550-20+15*d+7695/4</td><td class="ds">支座宽-保护层+弯折+搭接</td><td class="num">2724</td><td class="num">2</td><td class="num">0</td><td class="num">0</td><td class="num">5.448</td><td class="num">10.896</td><td>直筋</td><td>直螺纹连接</td>
              </tr>
              <tr class="short">
                <td class="rh">4</td><td class="nm">1跨.右支座<br>筋1</td><td class="num div">22</td><td class="gr">虫</td><td class="num">1</td>
                <td class="sh"><svg viewBox="0 0 201 28" width="201" height="28"><path d="M24 18H174" class="bar"/><text x="102" y="16" class="rd">5784</text></svg></td>
                <td class="num fm">7850/3+550+7850/3</td><td class="ds">搭接+支座宽+搭接</td><td class="num">5784</td><td class="num">3</td><td class="num">0</td><td class="num">0</td><td class="num">17.236</td><td class="num">51.709</td><td>直筋</td><td>直螺纹连接</td>
              </tr>
              <tr class="short">
                <td class="rh"></td><td></td><td class="div"></td><td></td><td></td><td></td><td></td><td></td><td></td><td></td><td></td><td></td><td></td><td></td><td></td><td></td>
              </tr>
            </tbody>
          </table>
        </div>
      </div>
    </div>
  </div>

  <svg class="marks" viewBox="0 0 1247 963" width="1247" height="963" aria-hidden="true">
    <ellipse cx="627" cy="27" rx="33" ry="15" class="ring"/>
    <ellipse cx="475" cy="88" rx="67" ry="26" class="ring thick"/>
    <path d="M637 50L646 68L635.500 68L611 425L581 745L567 898L578 745L604 425L627.500 68L628 68Z" class="pk"/>
    <path d="M398 204L404 184L410 189L458 115L466 119L414 194L421 196Z" class="pk"/>
    <path d="M401 216L403 216L452 425L535 745L558 880L572 875L566 900L553 883L549 882L527 745L449 425Z" class="pk"/>
  </svg>
</div>
</body>
</html>
```

FILE: styles.css
```css
* { box-sizing: border-box; }
html, body { margin: 0; padding: 0; }
body { background: #f0f0f0; font: 12px/16px "Noto Sans CJK SC", "Liberation Sans", sans-serif; color: #1c1c1c; overflow: hidden; }
i, em { font-style: normal; }
.defs { position: absolute; width: 0; height: 0; }
.app { position: relative; width: 1247px; height: 963px; overflow: hidden; background: #f0f0f0; }

.menu { display: flex; align-items: center; gap: 11px; height: 14px; padding-left: 16px; overflow: hidden; }
.menu > * { position: relative; top: -8px; flex: none; }
.menu .it { margin-right: 0; }
.menu .newc { margin-left: -3px; }
.menu .menuarr { margin: 0 -5px 0 -3px; }

.tb { display: flex; align-items: center; white-space: nowrap; }
.first { height: 27px; padding-top: 1px; background: linear-gradient(#f0f0f0, #f7f7f7 20%, #f3f3f3); }
.row2 { height: 25px; margin: 3px 0 0 2px; }
.row3 { height: 25px; margin: 3px 0 0 2px; }
.row4 { height: 27px; margin: 3px 0 0 2px; }
.row2 .panel, .row3 .panel, .row4 .panel { padding-bottom: 2px; }

.panel { display: flex; align-items: center; height: 100%; padding: 0 5px 0 2px; background: linear-gradient(#fafafa, #f4f4f4); border-radius: 2px; }
.row3 .p1 { padding-right: 0; }
.p2 { margin-left: 1px; padding-right: 4px; }
.full { flex: 1; }

.grip { flex: none; width: 3px; height: 16px; margin-right: 4px; background: radial-gradient(circle, #9a9a9a 1px, transparent 1.200px) 0 0 / 3px 4px; }
.endgrip { margin: 0 0 0 -1px; opacity: .5; }
.it { display: flex; align-items: center; flex: none; gap: 4px; margin-right: 8px; }
.gap2 { gap: 2px; }
.gap3 { gap: 3px; }
.r0 { margin-right: 0; }
.r1 { margin-right: 1px; }
.r4 { margin-right: 4px; }
.r5 { margin-right: 5px; }
.r6 { margin-right: 6px; }
.r7 { margin-right: 7px; }
.r9 { margin-right: 9px; }
.r10 { margin-right: 10px; }
.r14 { margin-right: 14px; }
.r16 { margin-right: 16px; }
.off { color: #9a9a9a; }
.i { display: block; width: 16px; height: 16px; flex: none; }
.box { height: 23px; padding: 0 3px 0 2px; background: #e6f2fd; border: 1px solid #3f9bf0; }
.sel { padding-left: 4px; margin-left: -3px; margin-right: 3px; }
.sep { flex: none; width: 1px; height: 18px; margin: 0 5px 0 -1px; background: #bcbcbc; }
.s1 { margin-right: 1px; }
.arr { flex: none; width: 0; height: 0; margin: 0 7px 0 -1px; border: 3px solid transparent; border-top: 3px solid #222; border-bottom: 0; }

.stub { flex: none; width: 5px; height: 7px; margin-right: 9px; background: #d4d4d4; }
.stubarr { margin: 0 7px 0 0; border-width: 3px; border-top-color: #666; }
.sigma { flex: none; width: 10px; margin-right: 8px; font: bold 13px/16px "Liberation Sans", sans-serif; }
.view2d { display: flex; align-items: center; height: 24px; margin: 0 4px 0 1px; padding-left: 3px; background: #fbfbfb; }
.view2d .it { margin-right: 6px; }
.view2d .arr { margin: 0 5px 0 0; }

.main { display: flex; height: 922px; }
.side { flex: none; width: 29px; margin-top: 3px; display: flex; flex-direction: column; }
.sidehead { display: flex; align-items: center; justify-content: flex-end; gap: 8px; height: 15px; padding-right: 4px; background: #0058e8; color: #fff; }
.pin { width: 6px; height: 8px; border: 2px solid #fff; border-bottom-width: 3px; }
.close { font: 15px/15px "Liberation Sans", sans-serif; }
.siderow { height: 23px; margin-right: 1px; background: #efefef; border: 1px solid #a8a8a8; border-width: 1px 1px 0 0; }
.sidebody { flex: 1; margin-right: 1px; background: #fff; border: 2px solid #a8a8a8; border-width: 1px 1px 1px 0; }
.sidefoot { flex: none; height: 27px; border-bottom: 1px solid #bbb; background: #efefef; }

.work { flex: none; width: 1213px; margin-left: 5px; display: flex; flex-direction: column; }
.canvas { flex: none; height: 621px; margin-top: 1px; }
.cad { display: block; }
.cad text { font-family: "Open Sans", sans-serif; }
.beamtx text { font-size: 10px; fill: #a8a8a8; }
.axistx text { font-size: 18px; fill: #d4d4d4; text-anchor: middle; }
.axistx text.dimm { fill: #9c9c9c; }
.ucs { font-size: 12px; }
.ucsy { fill: #00ff00; }
.ucsx { fill: #ff0000; }

.cbo { display: flex; align-items: center; justify-content: space-between; flex: none; width: 69px; height: 24px; margin-right: 3px; padding: 0 2px; background: #fff; }
.cbo .arr { margin: 0 2px 0 0; }
.narrow { width: 57px; margin-left: -2px; }
.lastcbo { margin-right: 6px; }
.blank { width: 56px; margin: 0 2px 0 -1px; }
.offset { width: 54px; margin: 0 8px 0 -2px; padding-right: 0; }
.offset .arr { margin: 0; }

.status { height: 24px; margin: 2px 0 0 2px; }
.sp1 { padding-right: 2px; }
.sp2 { margin-left: 1px; padding-left: 3px; padding-right: 0; }
.sp2 .grip { margin-right: 5px; }
.sp2 .box { padding-right: 3px; }
.sp2 .box.mid { padding-right: 2px; }
.sp3 { padding-right: 4px; }
.lab { flex: none; color: #999; font-family: "Open Sans", sans-serif; font-size: 12px; }
.xlab { margin: 0 5px 0 -2px; }
.ylab { margin: 0 5px 0 3px; }
.endsep { margin: 0 1px 0 5px; }
.spin { display: flex; align-items: center; justify-content: flex-end; flex: none; width: 58px; height: 23px; margin-right: 2px; padding-right: 3px; border: 1px solid #777; color: #9aa; font-family: "Open Sans", sans-serif; }
.spin em { position: relative; width: 8px; height: 13px; margin-left: 8px; }
.spin em::before, .spin em::after { content: ""; position: absolute; left: 1px; border: 3px solid transparent; }
.spin em::before { top: -1px; border-bottom-color: #444; border-top: 0; }
.spin em::after { bottom: -1px; border-top-color: #444; border-bottom: 0; }
.rotspin { width: 68px; margin: 0 3px 0 5px; }
.check { flex: none; width: 11px; height: 11px; margin-right: 8px; border: 1px solid #999; background: #fff; }
.rotlab { flex: none; }

.bottom { display: flex; flex: 1; min-height: 0; margin-top: 8px; overflow: hidden; }
.dots { flex: none; position: relative; width: 13px; margin-left: 1px; background: radial-gradient(circle, #bdbdbd .9px, transparent 1.100px) 0 10px / 4px 4px; }
.dockx { position: absolute; left: 1px; top: 0; width: 10px; height: 10px; border: 1px solid #666; background: linear-gradient(45deg, transparent 44%, #a33 45%, #a33 55%, transparent 56%), linear-gradient(-45deg, transparent 44%, #a33 45%, #a33 55%, transparent 56%), #e8e8e8; }
.gridwrap { flex: none; width: 1200px; overflow: hidden; }
.gridbar { display: flex; align-items: center; height: 25px; padding-left: 5px; white-space: nowrap; background: linear-gradient(#f6f6f6, #fff); }
.n { flex: none; width: 12px; height: 16px; margin-right: 12px; }
.n.nn { margin-right: 10px; }
.gridbar .navsep { margin: 0 9px 0 -6px; }
.gridbar .editsep { margin: 0 4px 0 -1px; }
.tiny { margin: 0 9px 0 0; border-width: 2px; border-top-width: 3px; }
.close2 { flex: none; margin-right: 8px; }
.total { flex: none; letter-spacing: .15px; }

.rebar { table-layout: fixed; width: 1214px; border-collapse: separate; border-spacing: 0; border-top: 1px solid #bdbdbd; font-size: 12px; line-height: 12px; }
.c1 { width: 33px; } .c2 { width: 73px; } .c3 { width: 56px; } .c4 { width: 36px; }
.c5 { width: 33px; } .c6 { width: 201px; } .c7 { width: 166px; } .c8 { width: 156px; }
.c9 { width: 61px; } .c10 { width: 38px; } .c11 { width: 39px; } .c12 { width: 49px; }
.c13 { width: 61px; } .c14 { width: 61px; } .c15 { width: 71px; } .c16 { width: 80px; }
.rebar th { height: 20px; padding: 0; font-weight: 400; background: linear-gradient(#fff, #ececec); border-right: 1px solid #bdbdbd; border-bottom: 1px solid #bdbdbd; text-align: center; }
.rebar th small { font: 10px "Liberation Sans", sans-serif; margin-left: 2px; }
.rebar th.act { background: linear-gradient(#ffdf9e, #f5c06c); color: #5a1a8c; }
.rebar td { height: 34px; padding: 0 0 0 2px; overflow: hidden; white-space: nowrap; background: #c9ffd6; border-right: 1px solid #bdbdbd; border-bottom: 1px solid #bdbdbd; }
.rebar .short td { height: 29px; }
.rebar td.rh { padding: 0; text-align: center; background: linear-gradient(#fff, #ececec); font: 11px "Liberation Sans", sans-serif; }
.rebar td.cur { background: #ffd48c; color: #5a0a8c; }
.rebar td.num { font: 11px/12px "Liberation Sans", sans-serif; letter-spacing: .1px; }
.rebar td.fm { letter-spacing: .2px; }
.rebar td.nm { padding-left: 3px; }
.rebar td.div { border-left: 1px solid #000; }
.rebar td.seld { background: #b4f0dc; }
.rebar td.gr { text-align: center; padding: 0; }
.rebar td.sh { padding: 0; }
.rebar td.sh svg { display: block; }
.sh text { font: 11px "Liberation Sans", sans-serif; fill: #111; }
.sh text.rd { fill: #f00000; text-anchor: middle; }
.bar { fill: none; stroke: #000; stroke-width: 2; }
.rebar td.ds { line-height: 12px; }

.marks { position: absolute; left: 0; top: 0; pointer-events: none; }
.ring { fill: none; stroke: #f01ef0; stroke-width: 5; }
.ring.thick { stroke-width: 6; }
.pk { fill: #f01ef0; }
```
